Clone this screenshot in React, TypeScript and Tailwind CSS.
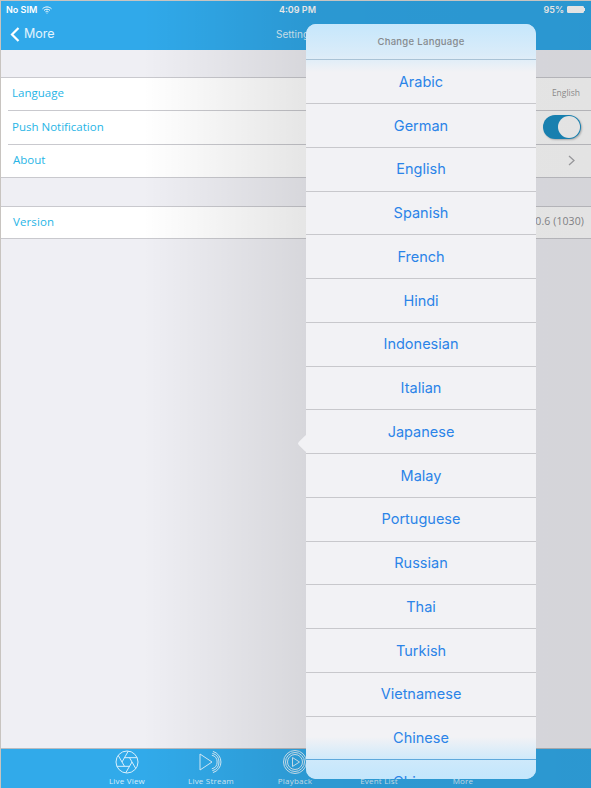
const languages = ["Arabic","German","English","Spanish","French","Hindi","Indonesian","Italian","Japanese","Malay","Portuguese","Russian","Thai","Turkish","Vietnamese","Chinese","Chinese"];

const blades = [0, 60, 120, 180, 240, 300].map((deg) => {
  const a = (deg * Math.PI) / 180;
  const rot = (x: number, y: number) => `${(12 + x * Math.cos(a) - y * Math.sin(a)).toFixed(2)} ${(12 + x * Math.sin(a) + y * Math.cos(a)).toFixed(2)}`;
  return `M${rot(5, 0)} L${rot(-1.3, 10.91)}`;
}).join(" ");

function Aperture() {
  return (
    <svg width="24" height="24" viewBox="0 0 24 24" fill="none" stroke="#d8effc" strokeWidth="1">
      <circle cx="12" cy="12" r="11" />
      <path d={blades} />
    </svg>
  );
}
function Stream() {
  return (
    <svg width="24" height="24" viewBox="0 0 24 24" fill="none" stroke="#d8effc" strokeWidth="1">
      <path d="M1 4 L13 12 L1 20 Z" />
      <path d="M12.8 5.2 A7 7 0 0 1 12.8 18.8 M13.3 3.3 A9 9 0 0 1 13.3 20.7 M13.9 1.4 A11 11 0 0 1 13.9 22.6" />
    </svg>
  );
}
function Playback() {
  return (
    <svg width="24" height="24" viewBox="0 0 24 24" fill="none" stroke="#d8effc" strokeWidth="1">
      <circle cx="12" cy="12" r="11.5" />
      <circle cx="12" cy="12" r="9.5" />
      <circle cx="12" cy="12" r="7.5" />
      <path d="M9.5 7.5 L16.5 12 L9.5 16.5 Z" />
    </svg>
  );
}

function Tab({ label, icon }: { label: string; icon?: React.ReactNode }) {
  return (
    <div className="w-[84px] flex flex-col items-center">
      <div className="h-6 mt-[1px]">{icon}</div>
      <div className="text-[8px] leading-[10px] mt-[2px] text-[#d8effc] tracking-[0.2px]">{label}</div>
    </div>
  );
}

export default function App() {
  return (
    <div className="relative w-[591px] h-[788px] overflow-hidden bg-[#efeff4] border-l border-t border-[#c8c4c0] flex flex-col font-['Open_Sans',sans-serif]">
      <header className="h-[49px] bg-[#30a9ea] text-white flex flex-col shrink-0">
        <div className="h-[17px] flex items-center justify-between pl-[5px] pr-[6px] text-[9px] font-semibold font-['Inter',sans-serif] relative">
          <div className="flex items-center gap-[5px]">
            <span>No SIM</span>
            <svg width="10" height="8" viewBox="0 0 10 8" fill="none" stroke="white" strokeWidth="1"><path d="M0.5 2.8 C3 0.3 7 0.3 9.5 2.8 M2 4.4 C3.8 2.8 6.2 2.8 8 4.4 M3.5 5.8 C4.5 5 5.5 5 6.5 5.8" /><circle cx="5" cy="7" r="0.6" fill="white" stroke="none" /></svg>
          </div>
          <span className="absolute left-[278px]">4:09 PM</span>
          <div className="flex items-center gap-[3px]">
            <span>95%</span>
            <div className="w-[17px] h-[7px] border border-white rounded-[1px] bg-white" />
            <div className="w-px h-[3px] -ml-[3px] bg-white" />
          </div>
        </div>
        <div className="flex-1 flex items-center relative">
          <svg className="ml-[9px]" width="10" height="15" viewBox="0 0 10 15" fill="none" stroke="white" strokeWidth="2.2"><path d="M8.5 1 L2 7.5 L8.5 14" /></svg>
          <span className="ml-[4px] text-[12.5px] font-['Inter',sans-serif] text-[#e4f4fd]">More</span>
          <span className="absolute left-[275px] text-[10px] text-[#d8effc] font-['Inter',sans-serif]">Settings</span>
        </div>
      </header>

      <div className="h-[27px] shrink-0" />
      <section className="bg-white border-y border-[#c9c9ce] text-[#27b5e6] text-[11.5px] shrink-0">
        <div className="h-[32px] pb-[2px] flex items-center justify-between pl-[11px] pr-[11px]">
          <span>Language</span>
          <span className="text-[8.5px] text-[#9a9a9a]">English</span>
        </div>
        <div className="ml-[7px] h-px bg-[#c9c9ce]" />
        <div className="h-[33px] pb-[2px] flex items-center justify-between pl-[4px] pr-[10px] ml-[7px]">
          <span>Push Notification</span>
          <div className="w-[38px] h-[24px] rounded-full bg-[#1b8fc4] flex items-center justify-end pr-[1px] shadow-[1px_1px_2px_rgba(0,0,0,0.25)]">
            <div className="w-[22px] h-[22px] rounded-full bg-white" />
          </div>
        </div>
        <div className="ml-[7px] h-px bg-[#c9c9ce]" />
        <div className="h-[32px] pb-[2px] flex items-center justify-between pl-[12px] pr-[16px]">
          <span>About</span>
          <svg width="7" height="11" viewBox="0 0 7 11" fill="none" stroke="#a9a9ad" strokeWidth="1.3"><path d="M1 1 L6 5.5 L1 10" /></svg>
        </div>
      </section>
      <div className="h-[28px] shrink-0" />
      <section className="h-[33px] pb-[2px] bg-white border-y border-[#c9c9ce] flex items-center justify-between pl-[12px] pr-[7px] text-[11.5px] tracking-[0.1px] text-[#27b5e6] shrink-0">
        <span>Version</span>
        <span className="text-[10.5px] text-[#8f8f93]">1.0.6 (1030)</span>
      </section>
      <div className="flex-1" />
      <footer className="h-[40px] shrink-0 bg-[#31aaea] border-t border-[#b9bcc0] flex justify-center pr-[2px]">
        <Tab label="Live View" icon={<Aperture />} />
        <Tab label="Live Stream" icon={<Stream />} />
        <Tab label="Playback" icon={<Playback />} />
        <Tab label="Event List" />
        <Tab label="More" />
      </footer>

      <div className="absolute inset-0 pointer-events-none bg-[linear-gradient(90deg,rgba(0,0,0,0)_24%,rgba(0,0,0,0.1)_52%,rgba(0,0,0,0.11)_100%)]" />

      <div className="absolute left-[305px] top-[23px] w-[230px] h-[755px]">
        <div className="absolute left-[-6px] top-[413px] w-[13px] h-[13px] rotate-45 rounded-[2px] bg-[#f2f2f5]" />
        <div className="relative h-full rounded-[10px] overflow-hidden bg-[#f2f2f5] font-['Inter',sans-serif]">
          <div className="absolute left-0 right-0 top-0 h-[48px] bg-[linear-gradient(180deg,rgba(190,229,253,0.85)_0%,rgba(190,229,253,0.45)_65%,rgba(190,229,253,0)_100%)]" />
          <div className="absolute left-0 right-0 bottom-0 h-[42px] bg-[linear-gradient(0deg,rgba(190,229,253,0.9)_0%,rgba(190,229,253,0.7)_45%,rgba(190,229,253,0)_100%)]" />
          <div className="relative h-[35.25px] flex items-center justify-center text-[9.5px] font-medium text-[#85898d] tracking-[0.3px]">Change Language</div>
          {languages.map((l, i) => (
            <div key={i} className={`relative h-[43.75px] border-t flex items-center justify-center text-[14.5px] text-[#2b84e8] ${i === 0 ? "border-[#a9c3d6]" : i === 16 ? "border-[#5fa9dc]" : "border-[#c8c8cc]"}`}>{l}</div>
          ))}
        </div>
      </div>
    </div>
  );
}
